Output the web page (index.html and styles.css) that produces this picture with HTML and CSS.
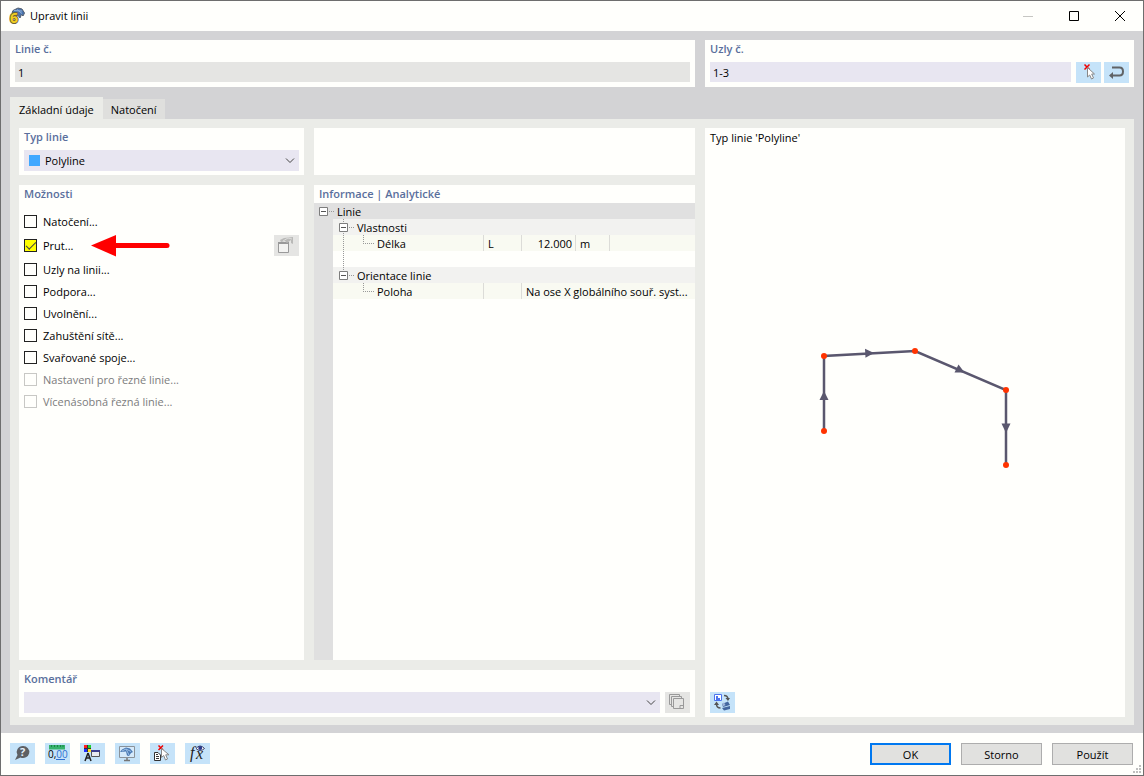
FILE: index.html
```html
<!DOCTYPE html>
<html lang="cs">
<head>
    <meta charset="UTF-8">
    <meta name="viewport" content="width=device-width, initial-scale=1.0">
    <title>Upravit linii</title>
    <link rel="stylesheet" href="styles.css">
</head>
<body>
    <div class="dialog">
        <header class="titlebar">
            <svg class="app-icon" width="16" height="18" viewBox="0 0 16 18">
                <path d="M3 5.500L4 3.500L9 1L13 2L15.500 6L14 9L12.500 7.500L11 11L8 7Z" fill="#4a74ae" stroke="#56606e" stroke-width="1"/>
                <path d="M5 3.500L13 4M8 2.500L13 6.500" stroke="#8fb0d8" stroke-width="1"/>
                <text x="1" y="16" class="icon-six">6</text>
            </svg>
            <h1>Upravit linii</h1>
            <div class="window-buttons">
                <button type="button" aria-label="Minimalizovat" disabled><svg width="10" height="10"><path d="M0 5.500H10" stroke="#c6c6c3"/></svg></button>
                <button type="button" aria-label="Maximalizovat"><svg width="10" height="10"><path d="M.5.5H9.500V9.500H.5Z" fill="none" stroke="#000"/></svg></button>
                <button type="button" aria-label="Zavřít"><svg width="10" height="10"><path d="M0 0L10 10M10 0L0 10" stroke="#000"/></svg></button>
            </div>
        </header>

        <main class="content">
            <div class="top-row">
                <section class="panel">
                    <label class="panel-title" for="line-no">Linie č.</label>
                    <div class="field-row">
                        <input type="text" id="line-no" value="1" readonly>
                    </div>
                </section>
                <section class="panel">
                    <label class="panel-title" for="nodes-no">Uzly č.</label>
                    <div class="field-row">
                        <input type="text" id="nodes-no" value="1-3">
                        <div class="button-pair">
                            <button type="button" class="icon-btn" aria-label="Vybrat uzly">
                                <svg width="25" height="21" viewBox="0 0 25 21">
                                    <path d="M8.500 2.500L13.500 7.500M13.500 2.500L8.500 7.500" stroke="#f00000" stroke-width="1.500"/>
                                    <path d="M11.500 5.500V15L13.700 13L15.500 17L17.500 16L15.700 12H18.500Z" fill="#fff" stroke="#888"/>
                                </svg>
                            </button>
                            <button type="button" class="icon-btn" aria-label="Obrátit pořadí">
                                <svg width="25" height="21" viewBox="0 0 25 21">
                                    <path d="M8 5.500H15.500Q19 5.500 19 9.500Q19 13.500 15.500 13.500H7" fill="none" stroke="#606366" stroke-width="2"/>
                                    <path d="M5 13.500L9 10V17Z" fill="#606366"/>
                                </svg>
                            </button>
                        </div>
                    </div>
                </section>
            </div>

            <div class="tabs" role="tablist">
                <button type="button" class="tab active" role="tab" aria-selected="true">Základní údaje</button>
                <button type="button" class="tab" role="tab" aria-selected="false">Natočení</button>
            </div>

            <div class="tab-page">
                <section class="panel">
                    <label class="panel-title" for="line-type">Typ linie</label>
                    <div class="field-row">
                        <div class="select-box with-swatch">
                            <select id="line-type"><option>Polyline</option></select>
                            <svg class="chevron" width="10" height="6"><path d="M1 .5L5 4.500L9 .5" fill="none" stroke="#444"/></svg>
                        </div>
                    </div>
                </section>

                <section class="panel"></section>

                <section class="panel preview">
                    <p>Typ linie 'Polyline'</p>
                    <svg class="polyline" viewBox="0 0 410 542">
                        <path d="M114 281V206L205 201L296 240V315" fill="none" stroke="#5a576e" stroke-width="2.500"/>
                        <g fill="#5a576e">
                            <path d="M114 241L118.500 250H109.500Z"/>
                            <path d="M164 203L155 198.700L155.500 207.700Z"/>
                            <path d="M254.500 222.500L248.500 214.500L244.500 222.500Z"/>
                            <path d="M296 283L300.500 273.500H291.500Z"/>
                        </g>
                        <g fill="#ff3300">
                            <circle cx="114" cy="281" r="3"/>
                            <circle cx="114" cy="206" r="3"/>
                            <circle cx="205" cy="201" r="3"/>
                            <circle cx="296" cy="240" r="3"/>
                            <circle cx="296" cy="315" r="3"/>
                        </g>
                    </svg>
                    <button type="button" class="icon-btn" aria-label="Přepnout zobrazení">
                        <svg width="25" height="21" viewBox="0 0 25 21">
                            <path d="M4.500 2.500H11.500V8.500H4.500Z" fill="#fff" stroke="#4c74ee"/>
                            <path d="M7 4V7H10" fill="none" stroke="#4c74ee" stroke-width="2"/>
                            <path d="M14 3.500Q18 3.500 18 7.500M6.500 12Q6.500 16 10.500 16" fill="none" stroke="#555" stroke-width="1.500"/>
                            <path d="M15.500 6H20L18 9Z M4 13L6.500 9.500L9 13Z" fill="#555"/>
                            <path d="M12 12L18 9.500L20 13L13 15Z M12 16L20 14V17L14 18.500Z" fill="#44669f"/>
                            <path d="M12 11.500L14 10.500L15.500 13L13 14.500Z" fill="#9fb6da"/>
                        </svg>
                    </button>
                </section>

                <section class="panel">
                    <h2 class="panel-title">Možnosti</h2>
                    <ul class="options">
                        <li><label><input type="checkbox">Natočení...</label></li>
                        <li class="member">
                            <label><input type="checkbox" checked>Prut...</label>
                            <svg class="pointer" width="79" height="22" viewBox="0 0 79 22">
                                <path d="M0 10.500L25 0V21.500Z" fill="#f00"/>
                                <path d="M24 10.500H76" stroke="#f00" stroke-width="5" stroke-linecap="round"/>
                            </svg>
                            <button type="button" class="icon-btn grey" aria-label="Nový prut" disabled>
                                <svg width="25" height="21" viewBox="0 0 25 21">
                                    <path d="M4.500 7.500H14.500V17.500H4.500Z" fill="#f3f3f1" stroke="#999"/>
                                    <path d="M4 8H15" stroke="#999" stroke-width="2"/>
                                    <path d="M6 5L10 3L19 2V9L17 8V5L13 8L11 6L7 7Z" fill="#b9b9b7"/>
                                    <path d="M9 6L14 3L18 4" fill="none" stroke="#dededc"/>
                                </svg>
                            </button>
                        </li>
                        <li><label><input type="checkbox">Uzly na linii...</label></li>
                        <li><label><input type="checkbox">Podpora...</label></li>
                        <li><label><input type="checkbox">Uvolnění...</label></li>
                        <li><label><input type="checkbox">Zahuštění sítě...</label></li>
                        <li><label><input type="checkbox">Svařované spoje...</label></li>
                        <li><label><input type="checkbox" disabled>Nastavení pro řezné linie...</label></li>
                        <li><label><input type="checkbox" disabled>Vícenásobná řezná linie...</label></li>
                    </ul>
                </section>

                <section class="panel info">
                    <h2 class="panel-title">Informace | Analytické</h2>
                    <div class="tree">
                        <table>
                            <colgroup>
                                <col class="col-gutter"><col class="col-name"><col class="col-symbol"><col class="col-value"><col class="col-unit"><col>
                            </colgroup>
                            <tbody>
                                <tr class="root">
                                    <td colspan="6">
                                        <div class="node">
                                            <button type="button" class="toggle" aria-label="Sbalit Linie">
                                                <svg width="23" height="16"><path d="M5.500 4.500H13.500V12.500H5.500Z" fill="#fff" stroke="#7d7d7d"/><path d="M7 8.500H12" stroke="#555"/><path d="M15 8.500H20" stroke="#999" stroke-dasharray="1 1"/></svg>
                                            </button>Linie
                                        </div>
                                    </td>
                                </tr>
                                <tr class="group">
                                    <td></td>
                                    <td colspan="5">
                                        <div class="node">
                                            <button type="button" class="toggle" aria-label="Sbalit Vlastnosti">
                                                <svg width="24" height="16"><path d="M10.500 0V16" stroke="#999" stroke-dasharray="1 1"/><path d="M6.500 4.500H14.500V12.500H6.500Z" fill="#fff" stroke="#7d7d7d"/><path d="M8 8.500H13" stroke="#555"/><path d="M16 8.500H21" stroke="#999" stroke-dasharray="1 1"/></svg>
                                            </button>Vlastnosti
                                        </div>
                                    </td>
                                </tr>
                                <tr class="item">
                                    <td></td>
                                    <td><div class="node"><svg width="44" height="16"><path d="M10.500 0V16M30.500 0V8.500M30 8.500H41" fill="none" stroke="#999" stroke-dasharray="1 1"/></svg>Délka</div></td>
                                    <td>L</td>
                                    <td class="number">12.000</td>
                                    <td>m</td>
                                    <td></td>
                                </tr>
                                <tr>
                                    <td></td>
                                    <td colspan="5"><div class="node"><svg width="44" height="16"><path d="M10.500 0V16" stroke="#999" stroke-dasharray="1 1"/></svg></div></td>
                                </tr>
                                <tr class="group">
                                    <td></td>
                                    <td colspan="5">
                                        <div class="node">
                                            <button type="button" class="toggle" aria-label="Sbalit Orientace linie">
                                                <svg width="24" height="16"><path d="M10.500 0V5" stroke="#999" stroke-dasharray="1 1"/><path d="M6.500 4.500H14.500V12.500H6.500Z" fill="#fff" stroke="#7d7d7d"/><path d="M8 8.500H13" stroke="#555"/><path d="M16 8.500H21" stroke="#999" stroke-dasharray="1 1"/></svg>
                                            </button>Orientace linie
                                        </div>
                                    </td>
                                </tr>
                                <tr class="item">
                                    <td></td>
                                    <td><div class="node"><svg width="44" height="16"><path d="M30.500 0V8.500M30 8.500H41" fill="none" stroke="#999" stroke-dasharray="1 1"/></svg>Poloha</div></td>
                                    <td></td>
                                    <td colspan="3">Na ose X globálního souř. syst...</td>
                                </tr>
                            </tbody>
                        </table>
                    </div>
                </section>

                <section class="panel comment">
                    <label class="panel-title" for="comment">Komentář</label>
                    <div class="field-row">
                        <div class="select-box">
                            <select id="comment"><option></option></select>
                            <svg class="chevron" width="10" height="6"><path d="M1 .5L5 4.500L9 .5" fill="none" stroke="#444"/></svg>
                        </div>
                        <button type="button" class="icon-btn grey" aria-label="Převzít komentář" disabled>
                            <svg width="25" height="21" viewBox="0 0 25 21">
                                <path d="M6 12.500H4.500V2.500H14.500V4M8 14.500H6.500V4.500H16.500V6" fill="none" stroke="#999"/>
                                <path d="M8.500 6.500H18.500V16.500H8.500Z M15 16.500V13.500H18.500" fill="none" stroke="#999"/>
                            </svg>
                        </button>
                    </div>
                </section>
            </div>
        </main>

        <footer class="footer">
            <div class="tools">
                <button type="button" class="icon-btn" aria-label="Nápověda">
                    <svg width="25" height="21" viewBox="0 0 25 21">
                        <path d="M13 3A6.300 6 0 1 1 10.500 14.500L5 17L7.500 12A6.300 6 0 0 1 13 3Z" fill="#5d6064"/>
                        <text x="10" y="13" class="icon-help">?</text>
                    </svg>
                </button>
                <button type="button" class="icon-btn" aria-label="Jednotky a desetinná místa">
                    <svg width="25" height="21" viewBox="0 0 25 21">
                        <path d="M4 2H20V6.500H4Z" fill="#35b36c"/>
                        <path d="M6.500 2V4M9.500 2V4M12.500 2V4M15.500 2V4M18 2V4" stroke="#1d8249"/>
                        <text x="3" y="15" class="icon-num">0,<tspan fill="#2f6fd0">00</tspan></text>
                        <path d="M11 16.500H20" stroke="#2f6fd0"/>
                    </svg>
                </button>
                <button type="button" class="icon-btn" aria-label="Barvy">
                    <svg width="25" height="21" viewBox="0 0 25 21">
                        <path d="M4 2H11V9H4Z" fill="#333"/>
                        <path d="M4 2H7V5H4Z" fill="#ff2020"/>
                        <path d="M8 2H11V5H8Z" fill="#20d030"/>
                        <path d="M4 6H7V9H4Z" fill="#2030ff"/>
                        <path d="M8 6H11V9H8Z" fill="#ffe020"/>
                        <path d="M8 10L5 18M8 10L11 18M5.500 15H10.500" stroke="#222" stroke-width="1.500"/>
                        <path d="M11.500 7.500H19.500V13.500H11.500Z" fill="#e8eaf0" stroke="#555"/>
                        <path d="M11 8H20" stroke="#3c3f8f" stroke-width="2"/>
                    </svg>
                </button>
                <button type="button" class="icon-btn" aria-label="Zobrazení">
                    <svg width="25" height="21" viewBox="0 0 25 21">
                        <path d="M4.500 3.500H19.500V14.500H4.500Z" fill="#d5eafb" stroke="#8a9299"/>
                        <path d="M5 9L7 6.500L11 4.500L15 5.500L18 9L16 10L14 13L12 12.500L11 8.500Z" fill="#4879b4"/>
                        <path d="M7 8L11 6L16 8.500M11 6L14 12" fill="none" stroke="#9fc0e4"/>
                        <path d="M12 15V17.500M9 17.500H15" stroke="#777" stroke-width="1.500"/>
                    </svg>
                </button>
                <button type="button" class="icon-btn" aria-label="Výběr objektu">
                    <svg width="25" height="21" viewBox="0 0 25 21">
                        <path d="M8.500 2.500L13 7M13 2.500L8.500 7" stroke="#f00000" stroke-width="1.500"/>
                        <path d="M4.500 9.500H8L10.500 12V17.500H4.500Z" fill="#fff" stroke="#333"/>
                        <path d="M6 11.500H8M6 13.500H9M6 15.500H9" stroke="#333"/>
                        <path d="M11.500 5.500V14.500L13.700 12.500L15.500 17L17.500 16L15.700 11.800H19Z" fill="#fff" stroke="#888"/>
                    </svg>
                </button>
                <button type="button" class="icon-btn" aria-label="Vzorce">
                    <svg width="25" height="21" viewBox="0 0 25 21">
                        <text x="5" y="15" class="icon-fx">f</text>
                        <text x="11" y="16" class="icon-fx">x</text>
                        <path d="M11 5.500Q15 .5 19.500 5.500Q15 9.500 11 5.500Z" fill="#fff" stroke="#3a3d66"/>
                        <circle cx="15.200" cy="5" r="2" fill="#2b3a8c"/>
                    </svg>
                </button>
            </div>
            <div class="actions">
                <button type="button" class="btn primary">OK</button>
                <button type="button" class="btn">Storno</button>
                <button type="button" class="btn">Použít</button>
            </div>
            <svg class="grip" width="8" height="8">
                <path d="M6 0h2v2h-2zM3 3h2v2h-2zM6 3h2v2h-2zM0 6h2v2h-2zM3 6h2v2h-2zM6 6h2v2h-2z" fill="#bfbfbf"/>
            </svg>
        </footer>
    </div>
</body>
</html>
```

FILE: styles.css
```css
* {
    box-sizing: border-box;
}
body {
    margin: 0;
    font-family: "Open Sans", "Noto Sans", sans-serif;
    font-size: 11px;
    line-height: 16px;
    color: #000;
}
h1, h2, p, ul {
    margin: 0;
    padding: 0;
    font-weight: normal;
}
svg {
    display: block;
}
button, input, select {
    margin: 0;
    padding: 0;
    border: none;
    border-radius: 0;
    font: inherit;
    color: inherit;
}
.dialog {
    display: flex;
    flex-direction: column;
    min-height: 100vh;
    border: 1px solid #6e6e6e;
    background-color: #fffffc;
}

/* Title bar */
.titlebar {
    display: flex;
    align-items: center;
    height: 30px;
    padding-left: 8px;
}
.titlebar h1 {
    flex: 1;
    margin-left: 5px;
    font-size: 11px;
}
.window-buttons {
    display: flex;
}
.window-buttons button {
    display: flex;
    align-items: center;
    justify-content: center;
    width: 46px;
    height: 28px;
    background: none;
}

/* Panels */
.content {
    display: flex;
    flex: 1;
    flex-direction: column;
    padding: 9px 9px 8px;
    background-color: #d3d3d5;
}
.top-row {
    display: grid;
    grid-template-columns: minmax(0, 685fr) minmax(0, 429fr);
    gap: 10px;
}
.panel {
    padding: 0 5px 4px;
    background-color: #fffffc;
}
.panel-title {
    display: block;
    height: 22px;
    font-size: 11px;
    font-weight: 600;
    line-height: 18px;
    color: #5a6f9c;
}
.field-row {
    display: flex;
    gap: 5px;
    height: 21px;
}
.field-row input {
    flex: 1;
    min-width: 0;
    height: 20px;
    padding: 1px 3px 0;
    background-color: #e8e6f1;
}
.field-row input:read-only {
    background-color: #e5e5e3;
}
.button-pair {
    display: flex;
    gap: 3px;
}
.icon-btn {
    width: 25px;
    height: 21px;
    background-color: #c5e3f9;
}
.icon-btn.grey {
    background-color: #e5e5e3;
}
.select-box {
    position: relative;
    flex: 1;
}
.select-box select {
    width: 100%;
    height: 21px;
    padding: 1px 20px 0 4px;
    appearance: none;
    background-color: #e8e6f1;
}
.with-swatch select {
    padding-left: 21px;
}
.with-swatch::before {
    content: "";
    position: absolute;
    top: 5px;
    left: 5px;
    width: 11px;
    height: 11px;
    background-color: #40a8ff;
}
.chevron {
    position: absolute;
    top: 8px;
    right: 4px;
    pointer-events: none;
}

/* Tabs */
.tabs {
    display: flex;
    align-items: flex-end;
    height: 22px;
    margin-top: 10px;
}
.tab {
    height: 20px;
    padding: 2px 8px 0;
    background-color: #dfdfdd;
}
.tab.active {
    height: 22px;
    padding: 4px 9px 0;
    background-color: #ebece8;
}
.tab-page {
    display: grid;
    flex: 1;
    grid-template-columns: minmax(0, 285fr) minmax(0, 381fr) minmax(0, 420fr);
    grid-template-rows: auto 1fr auto;
    gap: 10px;
    padding: 9px 9px 8px;
    background-color: #ebece8;
}
.comment {
    grid-column: 1 / 3;
}
.preview {
    display: flex;
    grid-column: 3;
    grid-row: 1 / 4;
    flex-direction: column;
}
.preview p {
    height: 22px;
    line-height: 20px;
}
.polyline {
    flex: 1;
    width: 100%;
    min-height: 0;
}

/* Options */
.options {
    display: flex;
    flex-direction: column;
    gap: 1px;
    padding-top: 4px;
    list-style: none;
}
.options li {
    position: relative;
    display: flex;
    align-items: center;
    justify-content: space-between;
    height: 21px;
}
.options .member {
    height: 25px;
}
.options label {
    display: flex;
    align-items: center;
    gap: 6px;
}
.options input {
    width: 13px;
    height: 13px;
    border: 1px solid #222;
    appearance: none;
    background-color: #fffffc;
}
.options input:checked {
    display: grid;
    place-items: center;
    background-color: #ff0;
}
.options input:checked::before {
    content: "";
    width: 9px;
    height: 4px;
    margin-bottom: 2px;
    border-bottom: 1px solid #444;
    border-left: 1px solid #444;
    transform: rotate(-45deg);
}
.options input:disabled {
    border-color: #c8c8c5;
}
.options label:has(input:disabled) {
    color: #7c7c7c;
}
.pointer {
    position: absolute;
    top: 2px;
    left: 67px;
}

/* Information tree */
.info {
    display: flex;
    flex-direction: column;
    padding: 0;
}
.info .panel-title {
    height: 18px;
    padding-left: 5px;
}
.tree {
    flex: 1;
    background: linear-gradient(to right, #e0e0e0 19px, transparent 19px);
}
.tree table {
    width: 100%;
    border-collapse: collapse;
    table-layout: fixed;
}
.tree td {
    height: 16px;
    padding: 0;
    white-space: nowrap;
}
.col-gutter {
    width: 19px;
}
.col-name {
    width: 150px;
}
.col-symbol {
    width: 38px;
}
.col-value {
    width: 54px;
}
.col-unit {
    width: 34px;
}
.node {
    display: flex;
    height: 16px;
    line-height: 18px;
}
.toggle {
    background: none;
}
.root td {
    background-color: #e0e0e0;
}
.group td + td {
    background-color: #f2f2f0;
}
.item td + td {
    background-color: #f9faf2;
}
.item td + td + td {
    padding: 1px 0 0 5px;
    line-height: 15px;
    background-image: linear-gradient(#dcdcd8, #dcdcd8);
    background-repeat: no-repeat;
    background-size: 1px 100%;
}
.item .number {
    padding-right: 3px;
    text-align: right;
}

/* Footer */
.footer {
    position: relative;
    display: flex;
    align-items: flex-start;
    justify-content: space-between;
    height: 42px;
    padding: 10px 10px 0 9px;
}
.tools, .actions {
    display: flex;
    gap: 10px;
}
.btn {
    width: 81px;
    height: 22px;
    padding-top: 1px;
    border: 1px solid #adadad;
    background-color: #e1e1df;
}
.btn.primary {
    border: 2px solid #0078f0;
}
.grip {
    position: absolute;
    right: 2px;
    bottom: 2px;
}

/* Lettering inside icons */
.icon-six {
    font: bold 14px "Open Sans", sans-serif;
    fill: #f2cf20;
    stroke: #6d6436;
    stroke-width: 2px;
    paint-order: stroke;
}
.icon-help {
    font: bold 11px "Open Sans", sans-serif;
    fill: #e4f1fb;
}
.icon-num {
    font: 10px "Open Sans", sans-serif;
    fill: #000;
}
.icon-fx {
    font: italic 16px "Liberation Serif", serif;
    fill: #222;
    stroke: #222;
    stroke-width: 0;
}
```
